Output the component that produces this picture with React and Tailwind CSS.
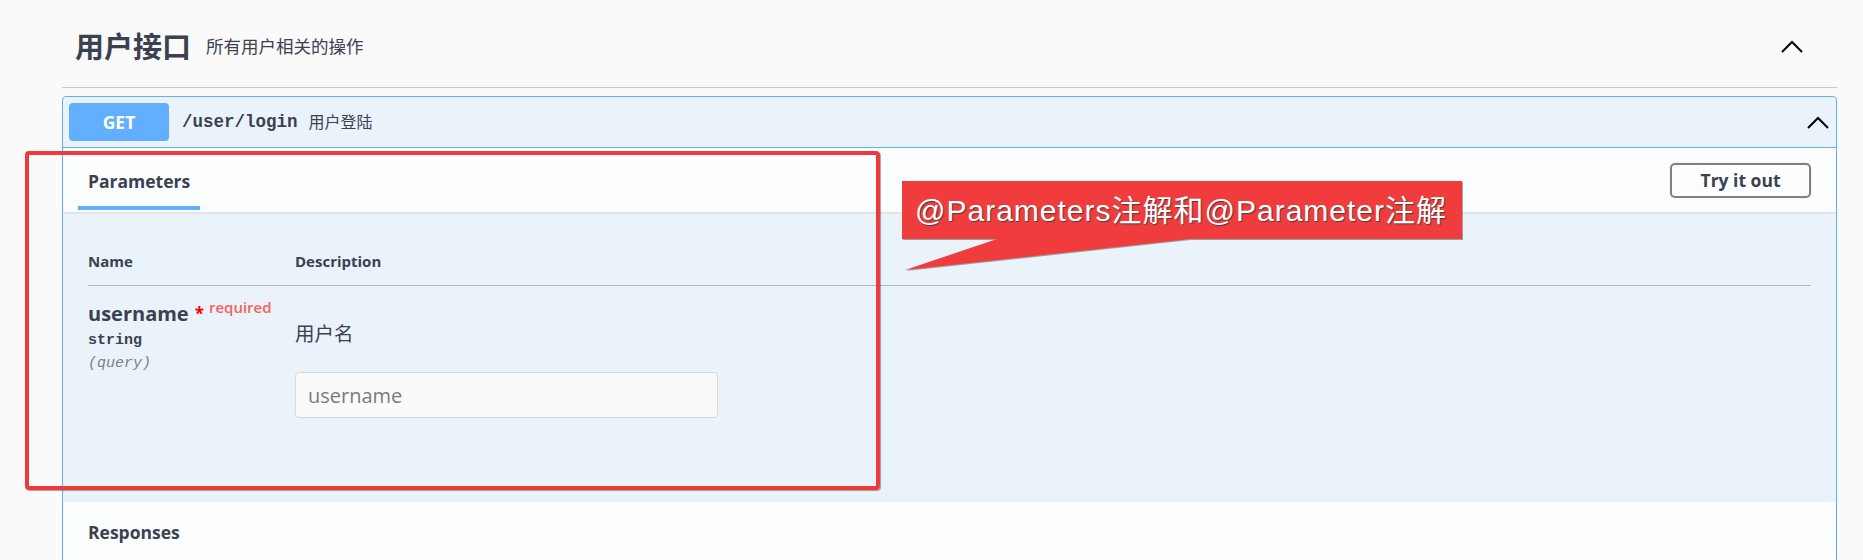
import React from 'react';

const Chevron = ({ className }) => (
  <svg className={className} width="22" height="13" viewBox="0 0 22 13" fill="none">
    <polyline points="1,12 11,2 21,12" stroke="#000" strokeWidth="2" />
  </svg>
);

const App = () => {
  return (
    <div className="relative h-[560px] w-full overflow-hidden bg-[#fafafa] pl-[62px] pr-[26px] font-['Open_Sans','Noto_Sans_CJK_SC',sans-serif] text-[#3b4151]">
      {/* tag header */}
      <div className="flex h-[88px] items-center border-b border-[#c8c9cc] pt-[6px] pl-[13px] pr-[34px]">
        <h3 className="text-[29px] font-bold leading-none">用户接口</h3>
        <small className="ml-[15px] text-[17.5px]">所有用户相关的操作</small>
        <Chevron className="ml-auto" />
      </div>

      {/* operation block */}
      <div className="mt-[8px] rounded-[4px] border border-[#61affe] bg-[#ebf3fa]">
        <div className="flex h-[51px] items-center border-b border-[#61affe] pl-[6px] pr-[7px]">
          <span className="flex h-[38px] w-[100px] items-center justify-center rounded-[4px] bg-[#61affe] text-[17.5px] font-bold text-white">
            GET
          </span>
          <span className="ml-[13px] font-['Liberation_Mono',monospace] text-[17.5px] font-semibold">/user/login</span>
          <span className="ml-[11px] text-[16px]">用户登陆</span>
          <Chevron className="ml-auto" />
        </div>

        {/* section header */}
        <div className="flex h-[64px] items-center justify-between bg-[#fbfdfe] pl-[15px] pr-[25px] shadow-[0_1px_2px_rgba(0,0,0,0.1)]">
          <div className="flex h-full flex-col justify-end pb-[2px]">
            <span className="mb-[13px] px-[10px] text-[17.5px] font-bold leading-[24px]">Parameters</span>
            <span className="h-[4px] w-full bg-[#61affe]" />
          </div>
          <button className="h-[35px] w-[141px] rounded-[5px] border-2 border-[#808080] bg-transparent text-[17.5px] font-bold shadow-[0_0_2px_rgba(0,0,0,0.15)]">
            Try it out
          </button>
        </div>

        {/* parameters table */}
        <div className="h-[290px] px-[25px] pt-[37px]">
          <div className="grid grid-cols-[207px_1fr] border-b border-[#b3b8c0] pb-[12px] text-[15px] font-bold leading-[24px]">
            <span>Name</span>
            <span>Description</span>
          </div>
          <div className="grid grid-cols-[207px_1fr] pt-[14px]">
            <div className="flex flex-col">
              <div className="flex items-start">
                <span className="text-[20px] font-bold leading-[28px]">username</span>
                <span className="ml-[6px] mt-[4px] text-[17px] font-bold leading-[20px] text-[#ff0000]">*</span>
                <span className="ml-[5px] mt-[-3px] text-[15px] font-semibold leading-[20px] text-[#f76164]">required</span>
              </div>
              <span className="mt-[3px] font-['Liberation_Mono',monospace] text-[15px] font-semibold leading-[20px]">string</span>
              <span className="mt-[3px] font-['Liberation_Mono',monospace] text-[15px] italic leading-[20px] text-[#808080]">(query)</span>
            </div>
            <div className="flex flex-col pt-[20px]">
              <p className="text-[19.5px] leading-[28px]">用户名</p>
              <input
                placeholder="username"
                className="mt-[24px] h-[46px] w-[423px] rounded-[4px] border border-[#d9d9d9] bg-[#fafafa] px-[12px] text-[20px] outline-none placeholder:text-[#7b7b7b]"
              />
            </div>
          </div>
        </div>

        {/* responses header */}
        <div className="flex h-[60px] items-center bg-[#fbfdfe] px-[25px] shadow-[0_1px_2px_rgba(0,0,0,0.1)]">
          <span className="text-[17.5px] font-bold">Responses</span>
        </div>
      </div>

      {/* annotation: red frame */}
      <div className="absolute left-[25px] top-[151px] h-[339px] w-[855px] rounded-[4px] border-4 border-[#ee3a3a] shadow-[1px_1px_1px_rgba(0,0,0,0.35)]" />

      {/* annotation: callout */}
      <svg
        className="absolute left-[902px] top-[181px] [filter:drop-shadow(1px_1px_0_rgba(0,0,0,0.35))]"
        width="562"
        height="92"
        viewBox="0 0 562 92"
      >
        <polygon points="0,0 560,0 560,58 288,58 3,89 95,58 0,58" fill="#f03c3c" />
      </svg>
      <div className="absolute left-[902px] top-[181px] flex h-[58px] w-[560px] items-center pl-[13px] font-['Liberation_Sans','Noto_Sans_CJK_SC',sans-serif] text-[30px] tracking-[1px] text-white [text-shadow:1px_1px_1px_rgba(60,60,60,0.9)]">
        @Parameters注解和@Parameter注解
      </div>
    </div>
  );
};

export default App;
